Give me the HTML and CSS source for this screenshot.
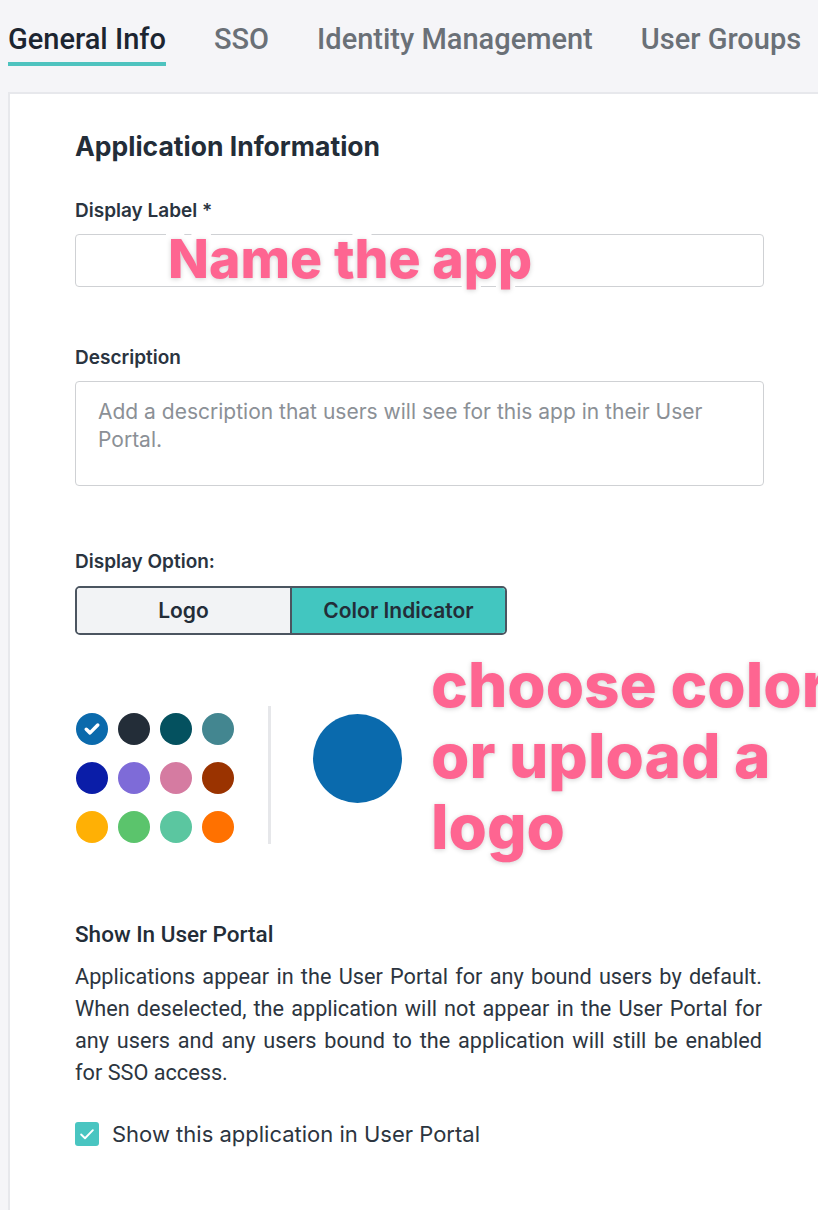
FILE: index.html
```html
<!DOCTYPE html>
<html lang="en">
<head>
    <meta charset="UTF-8">
    <meta name="viewport" content="width=device-width, initial-scale=1.0">
    <title>General Info</title>
    <link rel="stylesheet" href="styles.css">
</head>
<body>
    <nav class="tabs">
        <a class="tab active">General Info</a>
        <a class="tab">SSO</a>
        <a class="tab">Identity Management</a>
        <a class="tab">User Groups</a>
    </nav>

    <div class="panel">
        <h2>Application Information</h2>

        <label class="field-label first">Display Label *</label>
        <div class="input"></div>

        <label class="field-label">Description</label>
        <div class="textarea">Add a description that users will see for this app in their User Portal.</div>

        <label class="field-label option">Display Option:</label>
        <div class="segmented">
            <button class="seg">Logo</button>
            <button class="seg selected">Color Indicator</button>
        </div>

        <div class="color-picker">
            <div class="swatches">
                <span class="swatch" style="background:#0b6aac">
                    <svg viewBox="0 0 16 16" width="20" height="20"><path d="M3.4 8.2l3 2.9 6.2-6.3" fill="none" stroke="#fff" stroke-width="2.8" stroke-linecap="round" stroke-linejoin="round"/></svg>
                </span>
                <span class="swatch" style="background:#232d38"></span>
                <span class="swatch" style="background:#04515f"></span>
                <span class="swatch" style="background:#438690"></span>
                <span class="swatch" style="background:#0a1da8"></span>
                <span class="swatch" style="background:#7e6bd8"></span>
                <span class="swatch" style="background:#d57ba1"></span>
                <span class="swatch" style="background:#9a3300"></span>
                <span class="swatch" style="background:#ffb005"></span>
                <span class="swatch" style="background:#5bc46c"></span>
                <span class="swatch" style="background:#5bc6a0"></span>
                <span class="swatch" style="background:#ff7100"></span>
            </div>
            <div class="divider"></div>
            <div class="preview"></div>
        </div>

        <h3 class="section-title">Show In User Portal</h3>
        <p class="section-text">Applications appear in the User Portal for any bound users by default. When deselected, the application will not appear in the User Portal for any users and any users bound to the application will still be enabled for SSO access.</p>

        <label class="checkbox-row">
            <span class="checkbox">
                <svg viewBox="0 0 16 16" width="20" height="20"><path d="M3.3 8.4l3.1 3 6.3-6.5" fill="none" stroke="#fff" stroke-width="1.5" stroke-linecap="round" stroke-linejoin="round"/></svg>
            </span>
            Show this application in User Portal
        </label>
    </div>

    <div class="note note-name">Name the app</div>
    <div class="note note-color">choose color<br>or upload a<br>logo</div>
</body>
</html>
```

FILE: styles.css
```css
body {
    margin: 0;
    background: #f5f5f8;
    font-family: 'Inter', 'Roboto', sans-serif;
    color: #232d38;
    width: 818px;
    height: 1210px;
    overflow: hidden;
    position: relative;
}
.tabs {
    display: flex;
    gap: 48px;
    padding-left: 8px;
    height: 66px;
    white-space: nowrap;
}
.tab {
    font-family: 'Roboto', sans-serif;
    font-weight: 500;
    font-size: 29px;
    color: #6a7077;
    padding-top: 22px;
    height: 40px;
    border-bottom: 4px solid transparent;
}
.tab.active {
    color: #1c2531;
    border-bottom-color: #4ec3bf;
}
.panel {
    margin: 26px 0 0 8px;
    background: #fff;
    border: 2px solid #e7e8ec;
    border-right: none;
    height: 1111px;
    padding: 36px 0 0 65px;
    width: 900px;
}
.panel > * {
    width: 687px;
}
h2 {
    margin: 0;
    font-size: 26.5px;
    line-height: 32px;
    font-weight: 700;
    color: #232d38;
}
.field-label {
    display: block;
    font-size: 19px;
    line-height: 24px;
    font-weight: 600;
    color: #2a3440;
    margin: 59px 0 11px;
}
.field-label.first {
    margin-top: 37px;
}
.field-label.option {
    margin: 64px 0 12px;
}
.input {
    height: 51px;
    border: 1px solid #cfd1d4;
    border-radius: 4px;
}
.textarea {
    width: 643px;
    height: 87px;
    padding: 16px 22px 0;
    border: 1px solid #cfd1d4;
    border-radius: 4px;
    font-size: 21px;
    line-height: 28px;
    color: #8b9096;
}
.segmented {
    display: flex;
    width: 428px;
    height: 45px;
    border: 2px solid #4b5560;
    border-radius: 5px;
    overflow: hidden;
}
.seg {
    flex: 1;
    border: none;
    font-family: 'Inter', sans-serif;
    font-size: 21px;
    font-weight: 600;
    color: #232d38;
    background: #f2f3f5;
}
.seg + .seg {
    border-left: 2px solid #4b5560;
}
.seg.selected {
    background: #42c6c0;
}
.color-picker {
    display: flex;
    align-items: flex-start;
    margin-top: 71px;
}
.swatches {
    display: grid;
    grid-template-columns: repeat(4, 32px);
    column-gap: 10px;
    row-gap: 17px;
    margin: 7px 0 0 1px;
}
.swatch {
    width: 32px;
    height: 32px;
    border-radius: 50%;
    display: flex;
    align-items: center;
    justify-content: center;
}
.divider {
    width: 3px;
    height: 138px;
    background: #e6e7ea;
    margin-left: 34px;
}
.preview {
    width: 89px;
    height: 89px;
    border-radius: 50%;
    background: #0a6aad;
    margin: 8px 0 0 42px;
}
.section-title {
    margin: 78px 0 0;
    font-family: 'Roboto', sans-serif;
    font-size: 22.5px;
    line-height: 24px;
    font-weight: 500;
    color: #232d38;
}
.section-text {
    margin: 15px 0 0;
    font-family: 'Roboto', sans-serif;
    font-size: 21.7px;
    line-height: 32px;
    color: #2c3540;
    text-align: justify;
}
.checkbox-row {
    display: flex;
    align-items: center;
    gap: 13px;
    margin-top: 33px;
    font-size: 22px;
    line-height: 24px;
    color: #2c3540;
}
.checkbox {
    width: 24px;
    height: 24px;
    border-radius: 3px;
    background: #49c5c1;
    display: flex;
    align-items: center;
    justify-content: center;
}
.note {
    position: absolute;
    font-family: 'Inter', sans-serif;
    font-weight: 800;
    color: #fe6591;
    -webkit-text-stroke: 10px #fff;
    paint-order: stroke fill;
    text-shadow: 0 1px 5px rgba(0, 0, 0, 0.18);
    white-space: nowrap;
}
.note-name {
    left: 168px;
    top: 226px;
    font-size: 53.5px;
    line-height: 66px;
}
.note-color {
    left: 431px;
    top: 649px;
    font-size: 62px;
    line-height: 71px;
}
```
